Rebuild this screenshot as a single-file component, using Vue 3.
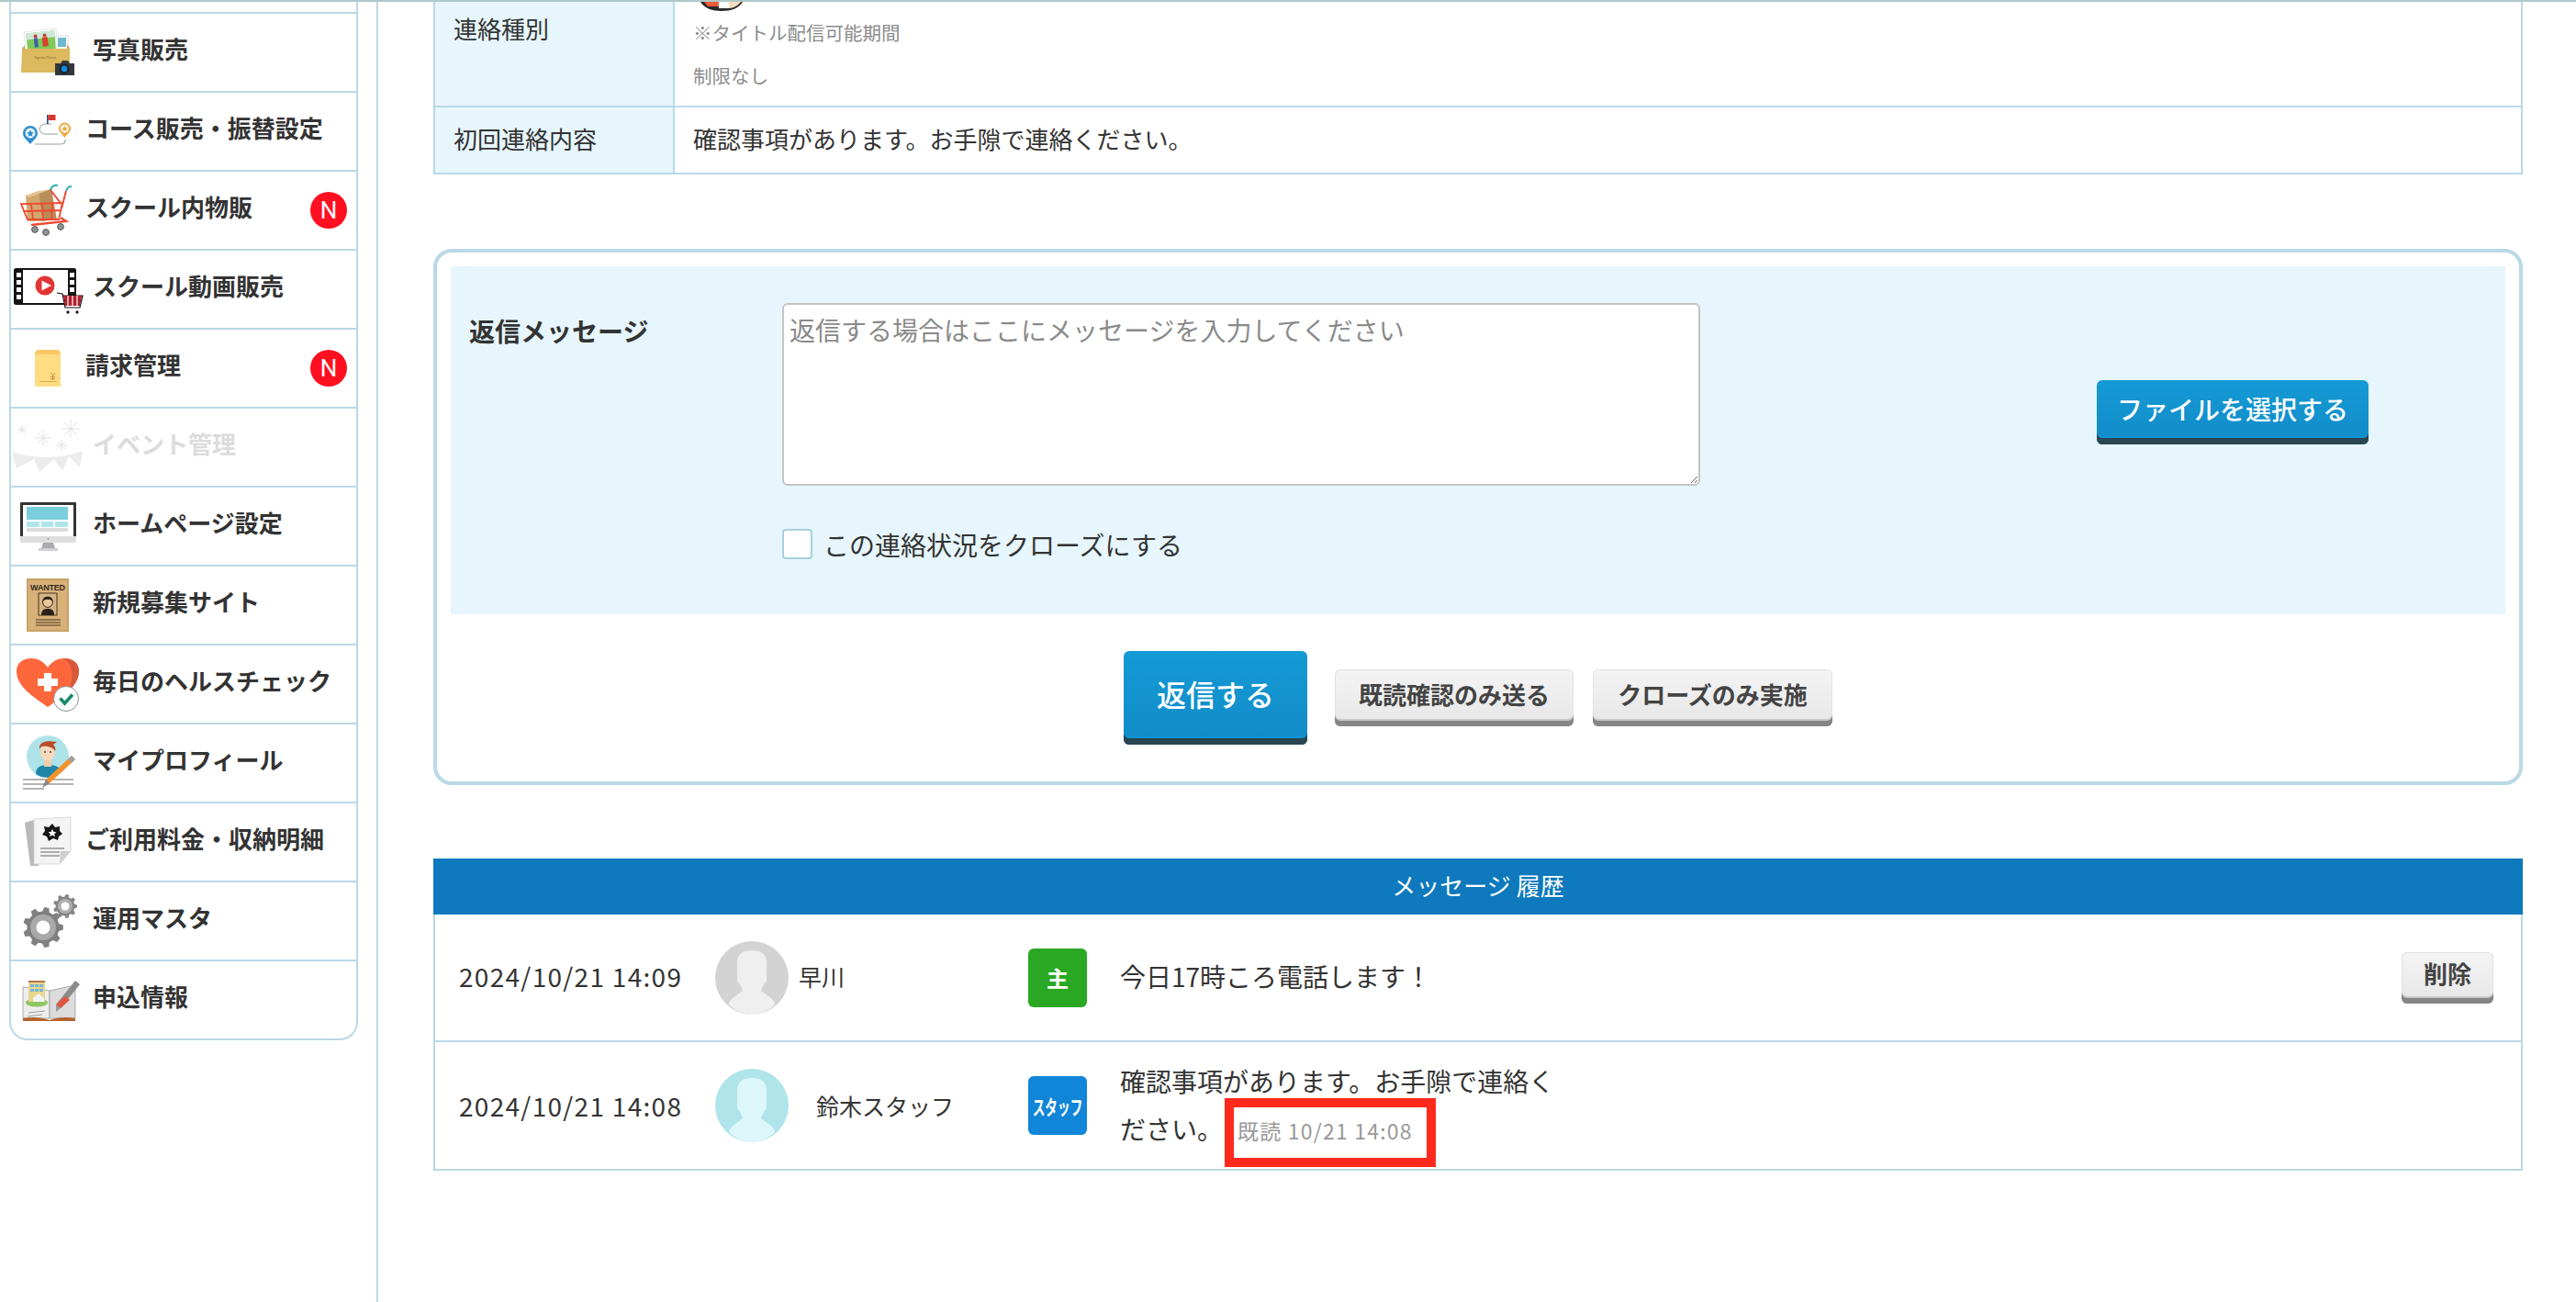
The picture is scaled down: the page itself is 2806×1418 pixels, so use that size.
<script setup>
// gear outline, used by the 運用マスタ icon
function gearPath(cx, cy, r, teeth) {
  const pts = []
  const step = (Math.PI * 2) / teeth
  for (let i = 0; i < teeth; i++) {
    const a = i * step
    const list = [
      [a - step * 0.32, r * 0.8],
      [a - step * 0.17, r],
      [a + step * 0.17, r],
      [a + step * 0.32, r * 0.8]
    ]
    list.forEach(([t, d]) => {
      pts.push((cx + Math.cos(t) * d).toFixed(1) + ' ' + (cy + Math.sin(t) * d).toFixed(1))
    })
  }
  return 'M' + pts.join('L') + 'Z'
}

const bigGear = gearPath(35, 49, 22, 9)
const smallGear = gearPath(59, 26, 13, 9)

const history = [
  {
    date: '2024/10/21 14:09',
    name: '早川',
    badge: '主',
    staff: false,
    text: '今日17時ころ電話します！'
  },
  {
    date: '2024/10/21 14:08',
    name: '鈴木スタッフ',
    badge: 'スタッフ',
    staff: true,
    text: '確認事項があります。お手隙で連絡ください。',
    read: '既読 10/21 14:08'
  }
]
</script>

<template>
  <div class="page">
    <div class="top-line"></div>
    <div class="columns">
      <aside class="side">
        <nav class="menu">
          <div class="menu-cut"></div>

          <a class="menu-row">
            <svg class="menu-icon" viewBox="0 0 90 84">
              <g transform="rotate(-6 32 28)">
                <rect x="15" y="18" width="35" height="25" fill="#fff" stroke="#e6e6e6" />
                <rect x="17" y="20" width="31" height="21" fill="#7fc95a" />
                <rect x="17" y="20" width="31" height="7" fill="#cfe8d8" />
                <circle cx="27" cy="24" r="2" fill="#c33" />
                <rect x="25" y="26" width="4" height="10" fill="#3d5fa8" />
                <circle cx="37" cy="24" r="2" fill="#b43" />
                <rect x="34" y="26" width="6" height="10" fill="#d9402c" />
              </g>
              <rect x="49" y="24" width="13" height="15" fill="#fff" stroke="#ddd" />
              <rect x="51" y="26" width="9" height="10" fill="#6fb6cf" />
              <path d="M12 38 L64 38 L64 64 L11 64Z" fill="#dcb95f" />
              <path d="M12 38 L15 34 L15 38Z M64 38 L61 33 L61 38Z" fill="#c9a54e" />
              <text x="37" y="49" class="box-label">Sgrum Photo</text>
              <path d="M48 54 H54 L56 51 H62 L64 54 H69 V67 H48Z" fill="#33383c" />
              <circle cx="58" cy="60" r="5.4" fill="#1d1f22" />
              <circle cx="58" cy="60" r="3.4" fill="#1487d8" />
            </svg>
            <span class="menu-name">写真販売</span>
          </a>

          <a class="menu-row">
            <svg class="menu-icon" viewBox="0 0 90 84">
              <path d="M59 51 C60 56 56 56 50 56 H26" fill="none" stroke="#b9bdc0" stroke-width="1.6" />
              <path d="M51 45 H38 C29 45 29 34 38 34 H44" fill="none" stroke="#b9bdc0" stroke-width="1.6" />
              <rect x="39" y="24" width="1.6" height="10" fill="#234a78" />
              <rect x="40.5" y="24" width="8" height="6" fill="#d9342c" />
              <path d="M13 44 A8 8 0 0 1 29 44 C29 49 24 52 21 56 C18 52 13 49 13 44Z" fill="#2f8fd0" />
              <circle cx="21" cy="44" r="5.4" fill="#fff" />
              <path d="M21 40 l1.2 2.8 3 .2 -2.3 2 .8 3 -2.7-1.6 -2.7 1.6 .8-3 -2.3-2 3-.2Z" fill="#2f8fd0" />
              <path d="M52 39 A6.5 6.5 0 0 1 65 39 C65 43 61 45 58.500 49 C56 45 52 43 52 39Z" fill="#f0a83c" />
              <circle cx="58.500" cy="39" r="4.500" fill="#fff" />
              <path d="M58.500 35.500 l1 2.400 2.500 .2 -1.900 1.600 .6 2.500 -2.200-1.300 -2.200 1.300 .6-2.500 -1.900-1.600 2.500-.2Z" fill="#f0a83c" />
            </svg>
            <span class="menu-name tight">コース販売・振替設定</span>
          </a>

          <a class="menu-row">
            <svg class="menu-icon" viewBox="0 0 90 84">
              <path d="M16 26 L30 21 L34 54 L18 54Z" fill="#d1a76d" />
              <path d="M30 22 L44 19 L50 52 L34 54Z" fill="#b98e58" />
              <path d="M16 26 L30 21 L44 19 L33 23 L19 28Z" fill="#e5c595" />
              <path d="M43 20 L54 34 M60 21 L55 40" fill="none" stroke="#f04a33" stroke-width="2" />
              <path d="M43 20 C44 16 47 14 51 15 M60 21 C61 18 63 16 66 16" fill="none" stroke="#2fb0a8" stroke-width="2" />
              <path d="M56 34 L52 52 H18 L11 35 Z M22 36 L24 52 M34 35 L35 52 M45 35 L44 52 M13 43 L54 42" fill="none" stroke="#f04a33" stroke-width="1.800" />
              <path d="M54 50 L60 54 L22 58" fill="none" stroke="#f04a33" stroke-width="2.400" />
              <circle cx="26" cy="63" r="3.400" fill="#8d9597" stroke="#555" />
              <circle cx="38" cy="66" r="3.400" fill="#8d9597" stroke="#555" />
              <circle cx="54" cy="60" r="3.400" fill="#8d9597" stroke="#555" />
            </svg>
            <span class="menu-name tight">スクール内物販</span>
            <span class="new-mark">N</span>
          </a>

          <a class="menu-row">
            <svg class="menu-icon" viewBox="0 0 90 84">
              <rect x="4" y="20" width="66" height="38" rx="1.500" fill="#fff" stroke="#151515" stroke-width="2" />
              <rect x="4" y="20" width="9" height="38" fill="#151515" />
              <rect x="62" y="20" width="9" height="38" fill="#151515" />
              <g fill="#fff">
                <rect x="6" y="24" width="5" height="5" /><rect x="6" y="32" width="5" height="5" />
                <rect x="6" y="40" width="5" height="5" /><rect x="6" y="48" width="5" height="5" />
                <rect x="64" y="24" width="5" height="5" /><rect x="64" y="32" width="5" height="5" />
                <rect x="64" y="40" width="5" height="5" />
              </g>
              <circle cx="37" cy="38" r="10.500" fill="#e33434" />
              <path d="M33.500 32.500 L44 38 L33.500 43.500Z" fill="#fff" />
              <path d="M50 46 L56 47 L59 62 H75 L78 49 H56" fill="#fff" stroke="#111" stroke-width="1.200" />
              <path d="M57 49 H77 L75 60 H59Z" fill="#b11f2d" />
              <path d="M62 49 V60 M67 49 V60 M72 49 V60" stroke="#fff" stroke-width="1.200" />
              <circle cx="62" cy="67" r="1.700" fill="#222" />
              <circle cx="72" cy="67" r="1.700" fill="#222" />
            </svg>
            <span class="menu-name">スクール動画販売</span>
          </a>

          <a class="menu-row">
            <svg class="menu-icon" viewBox="0 0 90 84">
              <rect x="26" y="24" width="28" height="38" fill="#fedc82" />
              <path d="M26 27 L28 22 H52 L54 27Z" fill="#fcc766" />
              <rect x="31" y="56" width="19" height="1" fill="#d9a94d" />
              <path d="M43 47 L45.500 50 L48 47 M45.500 50 V55 M43 51.500 H48 M43 53.500 H48" fill="none" stroke="#cf8f4a" stroke-width="1" />
            </svg>
            <span class="menu-name tight">請求管理</span>
            <span class="new-mark">N</span>
          </a>

          <a class="menu-row">
            <svg class="menu-icon" viewBox="0 0 90 84">
              <g stroke="#e2e2e2" stroke-width="1" fill="none">
                <path d="M7 23 H17 M12 18 V28 M8.500 19.500 L15.500 26.500 M15.500 19.500 L8.500 26.500" />
                <path d="M26 32 H44 M35 23 V41 M29 26 L41 38 M41 26 L29 38" />
                <path d="M55 22 H75 M65 12 V32 M58 15 L72 29 M72 15 L58 29" />
                <path d="M49 40 H61 M55 34 V46 M51 36 L59 44 M59 36 L51 44" />
              </g>
              <path d="M1 47 C25 55 55 55 78 46 L75 64 L63 52 L56 68 L47 55 L31 69 L25 55 L6 65Z" fill="#ececec" />
            </svg>
            <span class="menu-name muted">イベント管理</span>
          </a>

          <a class="menu-row">
            <svg class="menu-icon" viewBox="0 0 90 84">
              <path d="M10 17 Q10 16 11 16 H70 Q71 16 71 17 V53 H10Z" fill="#333" />
              <rect x="13" y="19" width="55" height="34" fill="#fff" />
              <rect x="17" y="21" width="45" height="14" fill="#7bcfdb" />
              <rect x="17" y="37" width="14" height="6" fill="#b0e6ea" />
              <rect x="33" y="37" width="13" height="6" fill="#b0e6ea" />
              <rect x="48" y="37" width="14" height="6" fill="#b0e6ea" />
              <rect x="17" y="44" width="45" height="4" fill="#dcdcdc" />
              <path d="M10 53 H71 V58 Q71 60 69 60 H12 Q10 60 10 58Z" fill="#dedede" />
              <circle cx="40.500" cy="56" r="1" fill="#999" />
              <path d="M35 60 H46 L48 66 H33Z" fill="#a9abb0" />
              <rect x="30" y="66" width="21" height="3" fill="#cfd0d2" />
            </svg>
            <span class="menu-name">ホームページ設定</span>
          </a>

          <a class="menu-row">
            <svg class="menu-icon" viewBox="0 0 90 84">
              <rect x="17" y="13" width="46" height="58" fill="#c9a167" />
              <rect x="19" y="15" width="42" height="54" fill="#d8b179" />
              <text x="40" y="26" class="wanted">WANTED</text>
              <rect x="30" y="29" width="20" height="24" fill="#d4b383" stroke="#4a3520" stroke-width="1" />
              <path d="M33 53 C33 47 36 46 40 46 C44 46 47 47 47 53Z" fill="#2c2118" />
              <circle cx="40" cy="39" r="5.400" fill="#e7c89a" stroke="#2c2118" stroke-width="1" />
              <path d="M34.500 38 C34 31 46 31 45.500 38 C43 35 37 35 34.500 38Z" fill="#2c2118" />
              <path d="M27 58 H54 M27 61 H54 M27 64 H54" stroke="#4a3520" stroke-width="1" />
            </svg>
            <span class="menu-name">新規募集サイト</span>
          </a>

          <a class="menu-row">
            <svg class="menu-icon" viewBox="0 0 90 84">
              <path d="M40 67 C28 58 6 46 6 28 C6 19 13 14 22 14 C30 14 36 18 40 24 C44 18 50 14 58 14 C67 14 74 19 74 28 C74 46 52 58 40 67Z" fill="#fe673c" />
              <path d="M58 14 C67 14 74 19 74 28 C74 38 67 46 60 52 C68 42 70 24 58 14Z" fill="#d5593a" />
              <path d="M36 30 H44 V36 H51 V44 H44 V50 H36 V44 H29 V36 H36Z" fill="#fff" />
              <circle cx="60" cy="58" r="13.500" fill="#fff" stroke="#8f9494" stroke-width="1" />
              <path d="M53.500 57.500 L58.500 63 L67 53.500" fill="none" stroke="#19896d" stroke-width="3.600" />
            </svg>
            <span class="menu-name">毎日のヘルスチェック</span>
          </a>

          <a class="menu-row">
            <svg class="menu-icon" viewBox="0 0 90 84">
              <circle cx="40" cy="35" r="23" fill="#aee3ea" />
              <path d="M27 54 C27 46 33 44 40 44 C47 44 53 46 54 50 L46 56 C40 59 32 58 27 54Z" fill="#1e87a8" />
              <rect x="36" y="36" width="8" height="10" fill="#f3cda9" />
              <ellipse cx="40" cy="30" rx="8" ry="9.500" fill="#f8d9bb" />
              <path d="M31 27 C30 19 38 17 50 19 L46 22 C48 24 49 26 48 29 C46 24 38 23 33 24Z" fill="#bb4b26" />
              <circle cx="37" cy="30" r=".9" fill="#333" />
              <circle cx="43" cy="30" r=".9" fill="#333" />
              <path d="M13 60 H68 M13 65 H68 M13 70 H36" stroke="#9a9a9a" stroke-width="1.300" />
              <path d="M66 34 L70 38 L42 64 L36 66 L38 60Z" fill="#f2932c" />
              <path d="M62 38 L66 42 L70 38 L66 34Z" fill="#9ba0a3" />
              <path d="M38 60 L42 64 L34 69Z" fill="#84888b" />
            </svg>
            <span class="menu-name">マイプロフィール</span>
          </a>

          <a class="menu-row">
            <svg class="menu-icon" viewBox="0 0 90 84">
              <path d="M15 21 L28 17 L30 68 L21 68Z" fill="#b9b9b9" />
              <path d="M25 17 L65 15 L65 52 L53 66 L25 66Z" fill="#f4f4f4" stroke="#d0d0d0" stroke-width=".8" />
              <path d="M65 52 H54 L53 66Z" fill="#cfcfcf" />
              <path d="M45 22 L48 26 L53 25 L53 30 L56 33 L52 36 L51 40 L46 38 L41 41 L39 36 L34 34 L37 30 L36 25 L41 26Z" fill="#161616" />
              <path d="M45 28 l1.500 3 3 .3 -2.300 2 .8 3 -3-1.700 -3 1.700 .8-3 -2.300-2 3-.3Z" fill="#fff" />
              <path d="M32 49 H58 M32 53 H53 M32 57 H53" stroke="#666" stroke-width="1" />
            </svg>
            <span class="menu-name tight">ご利用料金・収納明細</span>
          </a>

          <a class="menu-row">
            <svg class="menu-icon" viewBox="0 0 90 84">
              <path :d="bigGear" fill="#808080" />
              <circle cx="35" cy="49" r="14" fill="#a9a9a9" />
              <circle cx="35" cy="49" r="7.500" fill="#fff" />
              <path :d="smallGear" fill="#858585" />
              <circle cx="59" cy="26" r="8" fill="#b0b0b0" />
              <circle cx="59" cy="26" r="4.500" fill="#fff" />
            </svg>
            <span class="menu-name">運用マスタ</span>
          </a>

          <a class="menu-row">
            <svg class="menu-icon" viewBox="0 0 90 84">
              <path d="M13 28 L42 32 L42 62 L13 62Z" fill="#eee" stroke="#999" stroke-width=".8" />
              <path d="M70 26 L42 32 L42 62 L70 62Z" fill="#dcdcdc" stroke="#999" stroke-width=".8" />
              <path d="M13 62 C24 60 34 61 42 64 C50 61 60 60 70 62 V65 H13Z" fill="#b5622e" />
              <ellipse cx="28" cy="45" rx="12" ry="4.500" fill="#8dc763" />
              <rect x="19" y="22" width="18" height="22" fill="#e8d68c" />
              <rect x="19" y="21" width="18" height="2" fill="#b5744a" />
              <g fill="#79b5d8">
                <rect x="21" y="25" width="4" height="3" /><rect x="26" y="25" width="4" height="3" /><rect x="31" y="25" width="4" height="3" />
                <rect x="21" y="30" width="4" height="3" /><rect x="26" y="30" width="4" height="3" /><rect x="31" y="30" width="4" height="3" />
              </g>
              <path d="M30 35 L36 40 V44 H24 V40Z" fill="#f3f3f3" />
              <path d="M19 56 L37 54 M18 60 L34 58" stroke="#888" stroke-width=".8" />
              <path d="M70 21 L75 25 L54 51 L49 47Z" fill="#8c8c8c" />
              <path d="M59 38 L64 42 L54 51 L49 47Z" fill="#e2563f" />
              <path d="M49 47 L54 51 L49 55Z" fill="#9a9a9a" />
            </svg>
            <span class="menu-name">申込情報</span>
          </a>
        </nav>
      </aside>

      <main class="main">
        <table class="info">
          <tbody>
            <tr class="info-first">
              <th>連絡種別</th>
              <td>
                <svg class="info-avatar" viewBox="0 0 46 10">
                  <path d="M0 0 H46 C42 7 33 10 23 10 C13 10 4 7 0 0Z" fill="#2b2b2b" />
                  <path d="M4 0 H20 V5 H8Z" fill="#ef5a38" />
                  <path d="M20 0 H31 V7 H20Z" fill="#fff" />
                  <path d="M31 0 H44 C41 4 36 7 31 7Z" fill="#fadcc0" />
                </svg>
                <p class="note">※タイトル配信可能期間</p>
                <p class="note">制限なし</p>
              </td>
            </tr>
            <tr class="info-second">
              <th>初回連絡内容</th>
              <td>確認事項があります。お手隙で連絡ください。</td>
            </tr>
          </tbody>
        </table>

        <section class="reply">
          <div class="reply-form">
            <label class="reply-label">返信メッセージ</label>
            <div class="reply-fields">
              <textarea class="reply-text" placeholder="返信する場合はここにメッセージを入力してください"></textarea>
              <label class="close-check">
                <span class="check-box"></span>
                この連絡状況をクローズにする
              </label>
            </div>
            <button class="btn-blue file-btn" type="button">ファイルを選択する</button>
          </div>
          <div class="reply-actions">
            <button class="btn-blue send-btn" type="button">返信する</button>
            <button class="btn-gray action-btn" type="button">既読確認のみ送る</button>
            <button class="btn-gray action-btn second" type="button">クローズのみ実施</button>
          </div>
        </section>

        <section class="history">
          <h2 class="history-head">メッセージ 履歴</h2>
          <div v-for="(row, i) in history" :key="i" class="history-row">
            <div class="h-date">{{ row.date }}</div>
            <div class="h-user" :class="{ staff: row.staff }">
              <svg class="h-avatar" viewBox="0 0 80 80">
                <circle cx="40" cy="40" r="40" class="av-bg" />
                <path class="av-fg" d="M24 24 C24 13 31 10 40 10 C49 10 56 13 56 24 V40 C56 45 54 46 53 47 L50 54 L62 63 C64 65 65 67 65 69 C58 76 49 80 40 80 C31 80 22 76 15 69 C15 67 16 65 18 63 L30 54 L27 47 C26 46 24 45 24 40Z" />
              </svg>
              <span class="h-name">{{ row.name }}</span>
            </div>
            <div class="h-badge" :class="{ staff: row.staff }"><span>{{ row.badge }}</span></div>
            <div class="h-text">
              {{ row.text }}<span v-if="row.read" class="h-read">{{ row.read }}</span>
            </div>
            <button v-if="i === 0" class="btn-gray del-btn" type="button">削除</button>
          </div>
        </section>
      </main>
    </div>
  </div>
</template>

<style>
html, body {
  margin: 0;
  background: #fff;
}
</style>

<style scoped>
.page {
  width: 2806px;
  height: 1418px;
  overflow: hidden;
  background: #fff;
  color: #333;
  font-family: "Noto Sans CJK JP", "Noto Sans", sans-serif;
}

.top-line {
  height: 2px;
  background: #b0c8c9;
}

.columns {
  display: flex;
  height: 1416px;
}

/* sidebar */
.side {
  box-sizing: border-box;
  width: 412px;
  flex: none;
  padding-left: 10px;
  border-right: 2px solid #b9d9e6;
}

.menu {
  width: 380px;
  box-sizing: border-box;
  border: 2px solid #b9d9e6;
  border-top: 0;
  border-radius: 0 0 20px 20px;
}

.menu-cut {
  height: 11px;
}

.menu-row {
  display: flex;
  align-items: center;
  height: 84px;
  border-top: 2px solid #b9d9e6;
}

.menu-icon {
  width: 90px;
  height: 84px;
  flex: none;
}

.menu-name {
  font-size: 26px;
  font-weight: 700;
  line-height: 36px;
  margin-top: -9px;
  margin-left: -1px;
  white-space: nowrap;
}

.menu-name.tight {
  margin-left: -9px;
}

.menu-name.muted {
  color: #dcdcdc;
}

.new-mark {
  width: 40px;
  height: 40px;
  margin-left: auto;
  margin-right: 10px;
  border-radius: 50%;
  background: #ff0f1f;
  color: #fff;
  font: 400 26px/40px Roboto, sans-serif;
  text-align: center;
}

.box-label {
  font: 4px "Liberation Sans", sans-serif;
  fill: #8a6d2c;
  text-anchor: middle;
}

.wanted {
  font: 700 9px "Liberation Sans", sans-serif;
  fill: #33261a;
  text-anchor: middle;
  letter-spacing: -.2px;
}

/* main */
.main {
  flex: 1;
  min-width: 0;
  padding: 0 58px 0 60px;
}

.info {
  width: 100%;
  border-collapse: separate;
  border-spacing: 0;
  border-left: 2px solid #b9d9e6;
  border-right: 2px solid #b9d9e6;
  font-size: 26px;
  line-height: 36px;
}

.info th,
.info td {
  box-sizing: border-box;
}

.info th {
  width: 261px;
  background: #e6f6fc;
  border-right: 2px solid #b9d9e6;
  font-weight: 400;
  text-align: left;
  vertical-align: top;
  padding: 11px 20px 0;
}

.info td {
  vertical-align: top;
  padding: 0 0 0 20px;
}

.info-first th,
.info-first td {
  height: 115px;
  border-bottom: 2px solid #b9d9e6;
}

.info-second th,
.info-second td {
  height: 73px;
  border-bottom: 2px solid #b9d9e6;
  padding-top: 16px;
}

.info-avatar {
  display: block;
  width: 46px;
  height: 10px;
  margin: 0 0 0 8px;
}

.note {
  margin: 0;
  font-size: 20.5px;
  line-height: 47px;
  color: #8c8c8c;
}

/* reply panel */
.reply {
  box-sizing: border-box;
  margin-top: 81px;
  border: 4px solid #b9d9e6;
  border-radius: 20px;
  padding: 15px 15px 40px;
}

.reply-form {
  display: flex;
  align-items: flex-start;
  background: #e6f6fc;
  padding: 40px 0 60px 20px;
}

.reply-label {
  width: 341px;
  flex: none;
  font-size: 28px;
  font-weight: 700;
  line-height: 40px;
  margin-top: 10px;
}

.reply-fields {
  width: 1000px;
  flex: none;
}

.reply-text {
  display: block;
  box-sizing: border-box;
  width: 1000px;
  height: 199px;
  border: 2px solid #c4c4c4;
  border-radius: 6px;
  background: #fff;
  padding: 7px 6px;
  font: 28px/40px "Noto Sans CJK JP", sans-serif;
  color: #333;
  outline: none;
}

.reply-text::placeholder {
  color: #8a8a8a;
  opacity: 1;
}

.close-check {
  display: flex;
  align-items: center;
  gap: 12px;
  margin-top: 47px;
  height: 33px;
  font-size: 28px;
}

.check-box {
  box-sizing: border-box;
  width: 33px;
  height: 33px;
  background: #fff;
  border: 2px solid #a9cfe0;
  border-radius: 4px;
}

.btn-blue {
  box-sizing: border-box;
  border: 0;
  border-radius: 6px;
  padding: 0;
  color: #fff;
  font-family: inherit;
  font-weight: 500;
  background: linear-gradient(#149ad5, #128bc7);
  box-shadow: inset 0 -7px 0 #2a4550, inset 0 -9px 0 #0c95d8;
}

.file-btn {
  width: 296px;
  height: 70px;
  margin: 84px 0 0 432px;
  font-size: 28px;
  line-height: 62px;
  padding-bottom: 8px;
}

.reply-actions {
  display: flex;
  align-items: center;
  justify-content: center;
  margin-top: 40px;
}

.send-btn {
  width: 200px;
  height: 102px;
  font-size: 32px;
  padding-bottom: 10px;
}

.btn-gray {
  box-sizing: border-box;
  border: 0;
  border-radius: 6px;
  padding: 0 0 10px;
  color: #444;
  font-family: inherit;
  font-weight: 700;
  background: linear-gradient(#f4f4f4, #e6e6e6);
  box-shadow: inset 0 -6px 0 #858585, inset 0 -8px 0 #c9c9c9, inset 0 0 0 1px #e2e2e2;
}

.action-btn {
  width: 260px;
  height: 62px;
  margin-left: 30px;
  font-size: 26px;
}

.action-btn.second {
  width: 261px;
  margin-left: 21px;
}

/* history */
.history {
  margin-top: 80px;
}

.history-head {
  margin: 0;
  height: 61px;
  background: #0e79bc;
  color: #fff;
  font-size: 26px;
  font-weight: 400;
  line-height: 58px;
  text-align: center;
}

.history-row {
  display: flex;
  align-items: center;
  box-sizing: border-box;
  height: 140px;
  border: 2px solid #b9d9e6;
  border-top: 0;
  padding-left: 26px;
}

.history-row:first-of-type {
  height: 139px;
}

.history-row:first-of-type .h-date,
.history-row:first-of-type .h-name,
.history-row:first-of-type .h-text {
  margin-top: -3px;
}

.h-date {
  width: 279px;
  flex: none;
  font-size: 28px;
  letter-spacing: 1.3px;
  white-space: nowrap;
}

.h-user {
  display: flex;
  align-items: center;
  gap: 11px;
  width: 341px;
  flex: none;
}

.h-user.staff {
  gap: 30px;
}

.h-avatar {
  width: 80px;
  height: 80px;
  flex: none;
}

.av-bg {
  fill: #d3d3d3;
}

.av-fg {
  fill: #efefef;
}

.staff .av-bg {
  fill: #afe4ea;
}

.staff .av-fg {
  fill: #dcf6f9;
}

.h-name {
  font-size: 25px;
  white-space: nowrap;
}

.h-badge {
  display: flex;
  align-items: center;
  justify-content: center;
  width: 64px;
  height: 64px;
  flex: none;
  border-radius: 6px;
  background: #2aa824;
  color: #fff;
  font-size: 24px;
  font-weight: 700;
}

.h-badge.staff {
  background: #1185d8;
}

.h-badge.staff span {
  display: inline-block;
  font-size: 22px;
  white-space: nowrap;
  transform: scaleX(.62);
}

.h-text {
  width: 490px;
  flex: none;
  margin-left: 36px;
  font-size: 28px;
  line-height: 52px;
  white-space: normal;
}

.h-read {
  position: relative;
  display: inline-block;
  margin-left: 16px;
  font-size: 23px;
  letter-spacing: 1.2px;
  color: #999;
  white-space: nowrap;
}

/* red annotation drawn over the screenshot */
.h-read::after {
  content: "";
  position: absolute;
  top: -9px;
  bottom: -14px;
  left: -14px;
  right: -25px;
  border: 10px solid #ff2a1c;
  pointer-events: none;
}

.del-btn {
  width: 100px;
  height: 56px;
  margin-left: auto;
  margin-right: 30px;
  font-size: 26px;
}
</style>
